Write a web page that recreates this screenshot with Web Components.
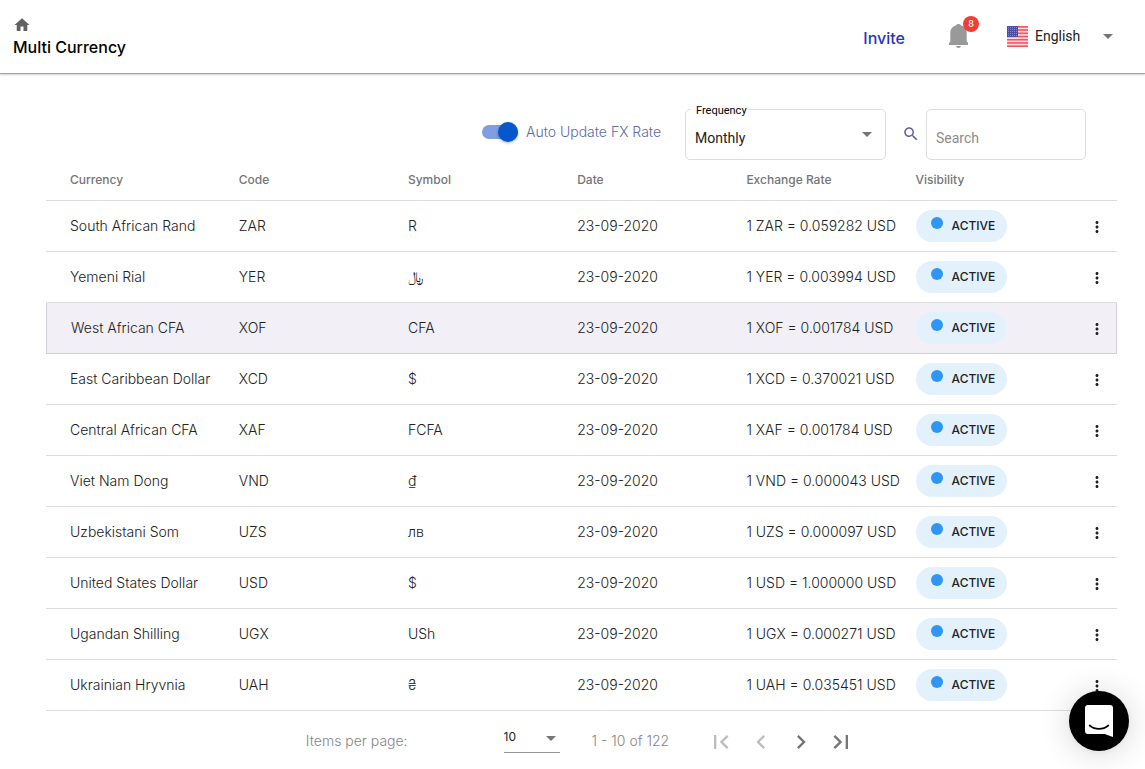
<!DOCTYPE html>
<html lang="en">
<head>
<meta charset="utf-8">
<meta name="viewport" content="width=device-width, initial-scale=1">
<title>Multi Currency</title>
<style>
  html, body { margin: 0; }
  body { background: #fff; color: #212121; font-family: Inter, "DejaVu Sans", sans-serif; font-size: 14px; line-height: 20px; }
</style>
</head>
<body>
<currency-app></currency-app>

<template id="app">
  <style>
    :host { display: block; }
    main { padding: 35px 28px 0 46px; }
  </style>
  <app-header heading="Multi Currency">
    <a-invite></a-invite>
    <notification-bell count="8"></notification-bell>
    <language-picker></language-picker>
  </app-header>
  <main>
    <fx-toolbar></fx-toolbar>
    <currency-table></currency-table>
    <table-paginator></table-paginator>
  </main>
  <chat-launcher></chat-launcher>
</template>

<template id="header">
  <style>
    :host { display: block; }
    header { display: flex; justify-content: space-between; align-items: center; height: 73px; padding: 0 32px 0 13px; border-bottom: 1px solid #a3a3a3; box-shadow: 0 1px 2px rgba(0,0,0,.18); }
    .home { display: block; width: 18px; height: 18px; color: #616161; }
    .home svg { display: block; width: 18px; height: 18px; }
    h1 { margin: 3px 0 0; font-size: 16px; line-height: 20px; font-weight: 500; color: #000; }
    .tools { display: flex; align-items: center; }
  </style>
  <header>
    <div class="brand">
      <a class="home" href="#" aria-label="Home"><svg viewBox="0 0 24 24" fill="currentColor"><path d="M10 20v-6h4v6h5v-8h3L12 3 2 12h3v8z"/></svg></a>
      <h1></h1>
    </div>
    <div class="tools"><slot></slot></div>
  </header>
</template>

<template id="invite">
  <style>
    :host { display: block; margin-right: 44px; padding-top: 4px; }
    a { font-size: 16px; font-weight: 500; color: #2a36b8; text-decoration: none; }
  </style>
  <a href="#">Invite</a>
</template>

<template id="bell">
  <style>
    :host { display: block; margin-right: 39px; padding-bottom: 2px; }
    button { position: relative; display: block; width: 19px; height: 24px; padding: 0; border: 0; background: none; color: #999; }
    svg { display: block; width: 19px; height: 24px; }
    span { position: absolute; left: 14px; top: -8px; width: 16px; height: 16px; border-radius: 50%; background: #f03e35; color: #fff; font: 500 9px/16px Inter, sans-serif; text-align: center; }
  </style>
  <button type="button" aria-label="Notifications">
    <svg viewBox="0 0 19 24" fill="currentColor"><path d="M9.500 0c1.200 0 1.900.6 2.200 1.300C15.200 2.300 17.700 5 17.700 8.600v9.200l1.300 1V21H0v-2.200l1.300-1V8.600C1.300 5 3.800 2.300 7.300 1.300 7.600.6 8.300 0 9.500 0zM7 22h5c-.3 1.200-1.300 2-2.500 2S7.300 23.200 7 22z"/></svg>
    <span></span>
  </button>
</template>

<template id="language">
  <style>
    :host { display: flex; align-items: center; gap: 7px; padding-bottom: 1px; }
    svg.flag { display: block; width: 21px; height: 21px; }
    .field { display: grid; align-items: center; width: 78px; }
    .field > * { grid-area: 1 / 1; }
    select { width: 100%; appearance: none; border: 0; padding: 0; margin: 0; background: none; color: #212121; font: 400 14px/20px Roboto, sans-serif; }
    .arrow { justify-self: end; width: 10px; height: 5px; fill: #757575; pointer-events: none; }
  </style>
  <svg class="flag" viewBox="0 0 21 21" aria-hidden="true"><rect width="21" height="21" fill="#ffdfe2"/><g class="stripes" fill="#f8525b"></g><rect width="11" height="11" fill="#4a4da3"/><g class="stars" fill="#8688c8"></g></svg>
  <div class="field">
    <select aria-label="Language"><option>English</option></select>
    <svg class="arrow" viewBox="0 0 10 5"><path d="M0 0h10L5 5z"/></svg>
  </div>
</template>

<template id="toolbar">
  <style>
    :host { display: flex; justify-content: flex-end; align-items: center; padding-right: 31px; }
    .toggle { display: flex; align-items: center; gap: 8px; margin-right: 24px; padding-bottom: 5px; color: #616aa3; font-size: 14px; font-weight: 300; }
    input[type=checkbox] { appearance: none; position: relative; width: 36px; height: 20px; margin: 0; }
    input[type=checkbox]::before { content: ""; position: absolute; inset: 3px 0; border-radius: 7px; background: #7f9fe0; }
    input[type=checkbox]::after { content: ""; position: absolute; left: 0; top: 0; width: 20px; height: 20px; border-radius: 50%; background: #fff; box-shadow: 0 1px 3px rgba(0,0,0,.3); }
    input[type=checkbox]:checked::after { left: 16px; background: #0557cc; }
    .frequency { position: relative; display: grid; align-items: center; width: 201px; }
    .frequency > select, .frequency > svg { grid-area: 1 / 1; }
    .frequency label { position: absolute; left: 6px; top: -7px; padding: 0 2px 0 5px; background: #fff; color: #000; font: 400 11px/18px Roboto, sans-serif; }
    select, input[type=text] { box-sizing: border-box; width: 100%; height: 51px; margin: 0; border: 1px solid #ddd; border-radius: 5px; background: #fff; appearance: none; padding: 7px 9px 0; font: 400 14px/20px Roboto, sans-serif; color: #212121; }
    .arrow { justify-self: end; width: 10px; height: 5px; margin-right: 14px; fill: #757575; pointer-events: none; }
    .search { display: flex; align-items: center; gap: 6px; margin-left: 16px; color: #5961a3; }
    .search svg { flex: none; width: 18px; height: 18px; margin-bottom: 2px; fill: currentColor; }
    input[type=text] { width: 160px; }
    input::placeholder { color: #8c8c8c; opacity: 1; }
  </style>
  <label class="toggle"><input type="checkbox" role="switch" checked>Auto Update FX Rate</label>
  <div class="frequency">
    <select id="frequency"><option>Monthly</option><option>Weekly</option><option>Daily</option></select>
    <svg class="arrow" viewBox="0 0 10 5"><path d="M0 0h10L5 5z"/></svg>
    <label for="frequency">Frequency</label>
  </div>
  <label class="search"><svg viewBox="0 0 24 24" aria-hidden="true"><path d="M15.500 14h-.79l-.28-.27C15.410 12.590 16 11.110 16 9.500 16 5.910 13.090 3 9.500 3S3 5.910 3 9.500 5.910 16 9.500 16c1.610 0 3.090-.59 4.230-1.570l.27.28v.79l5 4.990L20.490 19l-4.990-5zm-6 0C7.010 14 5 11.990 5 9.500S7.010 5 9.500 5 14 7.010 14 9.500 11.990 14 9.500 14z"/></svg><input type="text" placeholder="Search" aria-label="Search"></label>
</template>

<template id="table">
  <style>
    :host { display: block; }
    table { width: 100%; table-layout: fixed; border-collapse: separate; border-spacing: 0; }
    .first { width: 18%; }
    .data { width: 15.8%; }
    .menu { width: 40px; }
    th { height: 40px; padding: 0; border-bottom: 1px solid #ddd; text-align: left; color: #757575; font-size: 12px; line-height: 20px; font-weight: 500; }
    td { height: 50px; padding: 0; border-bottom: 1px solid #ddd; font-size: 14px; line-height: 20px; font-weight: 300; white-space: nowrap; }
    th:first-child, td:first-child { padding-left: 24px; }
    .selected td { background: #f2f0f6; border-bottom-color: #d2cedc; }
    .selected td:first-child { border-left: 1px solid #d2cedc; }
    .selected td:last-child { border-right: 1px solid #d2cedc; }
  </style>
  <table>
    <colgroup><col class="first"><col class="data"><col class="data"><col class="data"><col class="data"><col><col class="menu"></colgroup>
    <thead><tr><th>Currency</th><th>Code</th><th>Symbol</th><th>Date</th><th>Exchange Rate</th><th>Visibility</th><th></th></tr></thead>
    <tbody></tbody>
  </table>
</template>

<template id="chip">
  <style>
    :host { display: inline-flex; align-items: center; gap: 9px; height: 32px; padding: 0 12px 0 15px; border-radius: 16px; background: #e3f1fd; color: #212121; font-size: 12px; line-height: 20px; font-weight: 500; vertical-align: middle; }
    i { width: 12px; height: 12px; margin-bottom: 6px; border-radius: 50%; background: #3096f5; }
  </style>
  <i></i><slot></slot>
</template>

<template id="menu">
  <style>
    :host { display: block; }
    button { display: grid; place-items: center; width: 40px; height: 40px; padding: 2px 0 0; border: 0; background: none; }
    svg { width: 18px; height: 18px; fill: #212121; }
  </style>
  <button type="button" aria-label="Row actions"><svg viewBox="0 0 24 24"><path d="M12 8c1.100 0 2-.9 2-2s-.9-2-2-2-2 .9-2 2 .9 2 2 2zm0 2c-1.100 0-2 .9-2 2s.9 2 2 2 2-.9 2-2-.9-2-2-2zm0 6c-1.100 0-2 .9-2 2s.9 2 2 2 2-.9 2-2-.9-2-2-2z"/></svg></button>
</template>

<template id="paginator">
  <style>
    :host { display: flex; justify-content: center; align-items: center; height: 56px; padding: 2px 0 0 4px; color: #858585; font-weight: 300; }
    label { margin-right: 96px; }
    .size { display: grid; align-items: center; width: 56px; margin-right: 32px; }
    .size > * { grid-area: 1 / 1; }
    select { box-sizing: border-box; width: 100%; height: 24px; appearance: none; margin: 0; padding: 0 0 8px; border: 0; border-bottom: 1px solid #949494; border-radius: 0; background: none; color: #212121; font: 400 12px/15px Inter, sans-serif; }
    .arrow { justify-self: end; width: 10px; height: 5px; margin: 0 4px 6px 0; fill: #757575; pointer-events: none; }
    nav { display: flex; margin-left: 32px; }
    button { display: grid; place-items: center; width: 40px; height: 40px; padding: 2px 0 0; border: 0; background: none; color: #757575; }
    button:disabled { color: #bdbdbd; }
    button svg { width: 28px; height: 28px; fill: currentColor; }
  </style>
  <label for="size">Items per page:</label>
  <div class="size">
    <select id="size"><option>10</option><option>25</option><option>50</option></select>
    <svg class="arrow" viewBox="0 0 10 5"><path d="M0 0h10L5 5z"/></svg>
  </div>
  <span>1 - 10 of 122</span>
  <nav aria-label="Pages">
    <button type="button" disabled aria-label="First page"><svg viewBox="0 0 24 24"><path d="M18.410 16.590L13.820 12l4.590-4.590L17 6l-6 6 6 6zM6 6h2v12H6z"/></svg></button>
    <button type="button" disabled aria-label="Previous page"><svg viewBox="0 0 24 24"><path d="M15.410 7.410L14 6l-6 6 6 6 1.410-1.410L10.830 12z"/></svg></button>
    <button type="button" aria-label="Next page"><svg viewBox="0 0 24 24"><path d="M10 6L8.590 7.410 13.170 12l-4.580 4.590L10 18l6-6z"/></svg></button>
    <button type="button" aria-label="Last page"><svg viewBox="0 0 24 24"><path d="M5.590 7.410L10.180 12l-4.590 4.590L7 18l6-6-6-6zM16 6h2v12h-2z"/></svg></button>
  </nav>
</template>

<template id="chat">
  <style>
    :host { position: fixed; right: 16px; bottom: 18px; }
    button { display: grid; place-items: center; width: 60px; height: 60px; padding: 0; border: 0; border-radius: 50%; background: #000; box-shadow: 0 1px 6px rgba(0,0,0,.06), 0 2px 32px rgba(0,0,0,.16); }
    svg { width: 28px; height: 32px; }
  </style>
  <button type="button" aria-label="Open chat"><svg viewBox="0 0 28 32"><path fill="#fff" d="M3 0h22a3 3 0 0 1 3 3v29s-3.500-1.200-8-3H3a3 3 0 0 1-3-3V3a3 3 0 0 1 3-3z"/><path d="M4.700 20.500C10 25 18 25 23.300 20.500" fill="none" stroke="#000" stroke-width="1.700" stroke-linecap="round"/></svg></button>
</template>

<script>
  const define = (name, templateId, setup) => customElements.define(name, class extends HTMLElement {
    constructor() {
      super();
      this.attachShadow({ mode: 'open' }).append(document.getElementById(templateId).content.cloneNode(true));
    }
    connectedCallback() { if (setup && !this.ready) { this.ready = true; setup(this.shadowRoot, this); } }
  });

  define('app-header', 'header', (root, host) => { root.querySelector('h1').textContent = host.getAttribute('heading'); });
  define('a-invite', 'invite');
  define('notification-bell', 'bell', (root, host) => { root.querySelector('span').textContent = host.getAttribute('count'); });
  define('language-picker', 'language', root => {
    const h = 21 / 13;
    root.querySelector('.stripes').innerHTML = Array.from({ length: 7 }, (_, i) => `<rect y="${i * 2 * h}" width="21" height="${h}"/>`).join('');
    let stars = '';
    for (let y = 0; y < 5; y++) for (let x = 0; x < 5; x++) stars += `<rect x="${1 + x * 2}" y="${1 + y * 2}" width="1" height="1"/>`;
    root.querySelector('.stars').innerHTML = stars;
  });
  define('fx-toolbar', 'toolbar');
  define('status-chip', 'chip');
  define('row-menu', 'menu');

  const currencies = [
    ['South African Rand', 'ZAR', 'R', '0.059282'],
    ['Yemeni Rial', 'YER', '﷼', '0.003994'],
    ['West African CFA', 'XOF', 'CFA', '0.001784'],
    ['East Caribbean Dollar', 'XCD', '$', '0.370021'],
    ['Central African CFA', 'XAF', 'FCFA', '0.001784'],
    ['Viet Nam Dong', 'VND', '₫', '0.000043'],
    ['Uzbekistani Som', 'UZS', 'лв', '0.000097'],
    ['United States Dollar', 'USD', '$', '1.000000'],
    ['Ugandan Shilling', 'UGX', 'USh', '0.000271'],
    ['Ukrainian Hryvnia', 'UAH', '₴', '0.035451']
  ];
  define('currency-table', 'table', root => {
    root.querySelector('tbody').innerHTML = currencies.map(([name, code, symbol, rate]) =>
      `<tr${code === 'XOF' ? ' class="selected"' : ''}><td>${name}</td><td>${code}</td><td>${symbol}</td><td>23-09-2020</td><td>1 ${code} = ${rate} USD</td><td><status-chip>ACTIVE</status-chip></td><td><row-menu></row-menu></td></tr>`).join('');
  });
  define('table-paginator', 'paginator');
  define('chat-launcher', 'chat');
  define('currency-app', 'app');
</script>
</body>
</html>
